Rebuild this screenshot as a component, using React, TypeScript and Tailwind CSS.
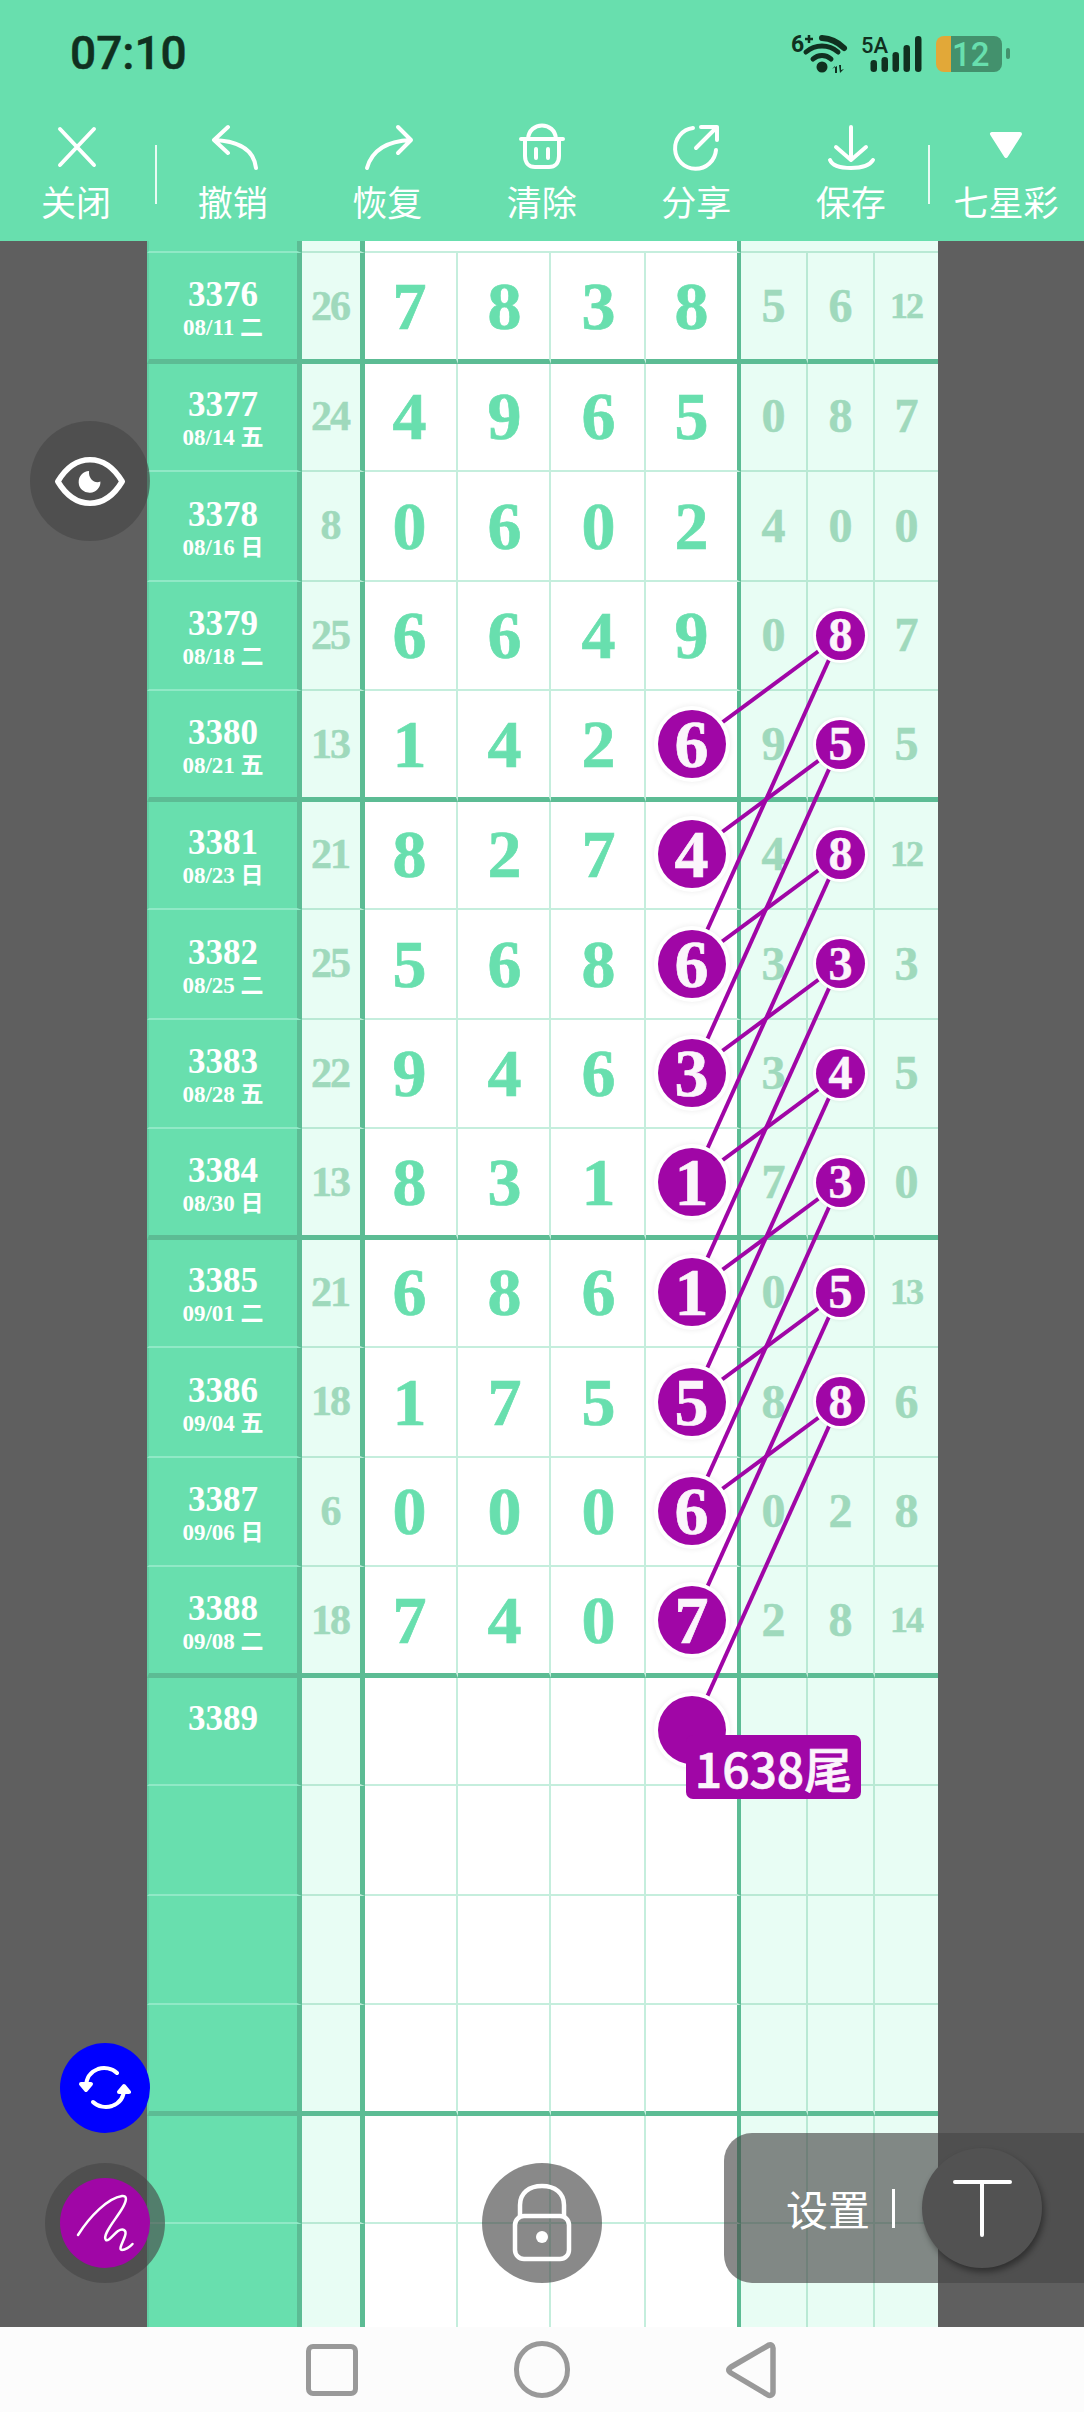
import React from "react";

const serif = "[font-family:'Liberation_Serif','Noto_Sans_CJK_SC',serif]";
const cjk = "[font-family:'Noto_Sans_CJK_SC',sans-serif]";

type Row = { n: string; d: string; s: string; m: string[]; r: string[]; big?: boolean; small?: boolean };
const data: Row[] = [
  { n: "3376", d: "08/11 二", s: "26", m: ["7", "8", "3", "8"], r: ["5", "6", "12"] },
  { n: "3377", d: "08/14 五", s: "24", m: ["4", "9", "6", "5"], r: ["0", "8", "7"] },
  { n: "3378", d: "08/16 日", s: "8", m: ["0", "6", "0", "2"], r: ["4", "0", "0"] },
  { n: "3379", d: "08/18 二", s: "25", m: ["6", "6", "4", "9"], r: ["0", "8", "7"], small: true },
  { n: "3380", d: "08/21 五", s: "13", m: ["1", "4", "2", "6"], r: ["9", "5", "5"], big: true, small: true },
  { n: "3381", d: "08/23 日", s: "21", m: ["8", "2", "7", "4"], r: ["4", "8", "12"], big: true, small: true },
  { n: "3382", d: "08/25 二", s: "25", m: ["5", "6", "8", "6"], r: ["3", "3", "3"], big: true, small: true },
  { n: "3383", d: "08/28 五", s: "22", m: ["9", "4", "6", "3"], r: ["3", "4", "5"], big: true, small: true },
  { n: "3384", d: "08/30 日", s: "13", m: ["8", "3", "1", "1"], r: ["7", "3", "0"], big: true, small: true },
  { n: "3385", d: "09/01 二", s: "21", m: ["6", "8", "6", "1"], r: ["0", "5", "13"], big: true, small: true },
  { n: "3386", d: "09/04 五", s: "18", m: ["1", "7", "5", "5"], r: ["8", "8", "6"], big: true, small: true },
  { n: "3387", d: "09/06 日", s: "6", m: ["0", "0", "0", "6"], r: ["0", "2", "8"], big: true },
  { n: "3388", d: "09/08 二", s: "18", m: ["7", "4", "0", "7"], r: ["2", "8", "14"], big: true },
  { n: "3389", d: "\u00a0", s: "", m: ["", "", "", ""], r: ["", "", ""], big: true },
  ...Array.from({ length: 5 }, () => ({ n: "", d: "", s: "", m: ["", "", "", ""], r: ["", "", ""] })),
];

const rowY = (i: number) => 306.75 + 109.5 * i;
const lines: [number, number][] = [];
for (let i = 3; i <= 10; i++) {
  lines.push([i, i + 1], [i, i + 3]);
}

function heightClass(i: number) {
  const thick = i % 4 === 0;
  const prevThick = i % 4 === 1;
  if (thick) return "h-[111px]";
  if (prevThick) return "h-[108px]";
  return "h-[109.5px]";
}

function Tool({ label, x, children, w }: { label: string; x: number; children: React.ReactNode; w: string }) {
  return (
    <div className={`flex flex-col items-center ${w}`}>
      <svg width="60" height="52" viewBox={`${x - 30} 120 60 52`} fill="none" stroke="#fff" strokeWidth="4" strokeLinecap="round" strokeLinejoin="round">
        {children}
      </svg>
      <div className={`mt-[8px] text-[35px] leading-[42px] text-white whitespace-nowrap ${cjk}`}>{label}</div>
    </div>
  );
}

function StatusIcons() {
  return (
    <svg width="280" height="70" viewBox="0 0 280 70" className="shrink-0">
      <text x="31" y="32" fontSize="23" fontWeight="700" fill="#10301f" fontFamily="Roboto">6</text>
      <path d="M45 19h8M49 15v8" stroke="#10301f" strokeWidth="2.500" />
      <circle cx="62" cy="47" r="5.500" fill="#10301f" />
      <g fill="none" stroke="#10301f" strokeLinecap="round">
        <path d="M53 39a13 13 0 0 1 18 0" strokeWidth="5" />
        <path d="M46 32a24 24 0 0 1 32 0" strokeWidth="5" />
        <path d="M62 18a34 34 0 0 1 22 10" strokeWidth="6" />
      </g>
      <path d="M72 49l3-3v7h2v-7zM79 45h2v5l3-1-4 4z" fill="#10301f" />
      <text x="101" y="33" fontSize="22" fontWeight="500" fill="#10301f" fontFamily="Roboto">5A</text>
      <g fill="#10301f">
        <rect x="110.500" y="40" width="6.500" height="12" rx="3.200" />
        <rect x="121.500" y="37" width="6.500" height="15" rx="3.200" />
        <rect x="132.500" y="32" width="6.500" height="20" rx="3.200" />
        <rect x="143.500" y="25" width="6.500" height="27" rx="3.200" />
        <rect x="155" y="16" width="6.500" height="36" rx="3.200" />
      </g>
      <path d="M191 16h-7a8 8 0 0 0-8 8v20a8 8 0 0 0 8 8h7z" fill="#e2a838" />
      <path d="M191 16h43a8 8 0 0 1 8 8v20a8 8 0 0 1-8 8h-43z" fill="#43916d" />
      <rect x="246" y="28" width="4" height="11" rx="2" fill="#43916d" />
      <text x="192" y="46" fontSize="33" fontWeight="500" fill="#68dfae" fontFamily="Roboto">12</text>
    </svg>
  );
}

export default function App() {
  return (
    <div className="relative flex h-[2412px] w-[1084px] flex-col overflow-hidden bg-[#5f5f5f]">
      {/* header */}
      <div className="h-[241px] shrink-0 bg-[#68dfae]">
        <div className="flex h-[120px] items-start justify-between">
          <div className="ml-[70px] mt-[26px] text-[46px] font-medium leading-[54px] text-[#10301f] [font-family:Roboto,sans-serif] [-webkit-text-stroke:0.5px_#10301f]">07:10</div>
          <div className="mr-[44px] mt-[20px]">
            <StatusIcons />
          </div>
        </div>
        <div className="flex h-[121px] items-start">
          <Tool label="关闭" x={76} w="w-[152px] shrink-0">
            <path d="M60 129L94 165M94 129L60 165" />
          </Tool>
          <div className="-mr-[1.5px] ml-[3px] mt-[25px] h-[59px] w-[2px] bg-[#e8fbf3]" />
          <Tool label="撤销" x={232} w="w-[154.5px] shrink-0">
            <path d="M227 127L213 140L227 153M213 140C238 141 253 150 255 168" />
          </Tool>
          <Tool label="恢复" x={387} w="w-[154.5px] shrink-0">
            <path d="M398 127L411 140L398 153M411 140C386 141 372 150 367 168" />
          </Tool>
          <Tool label="清除" x={542} w="w-[154.5px] shrink-0">
            <path d="M521 139H563M528 139C529 121 555 121 556 139M525 139V156C525 163 529 167 535 167H549C555 167 559 163 559 156V139M536 149V158M548 149V158" />
          </Tool>
          <Tool label="分享" x={696} w="w-[154.5px] shrink-0">
            <path d="M693 128A20.500 20.500 0 1 0 716 150M696 148L717 127M701 127H717V140" />
          </Tool>
          <Tool label="保存" x={850} w="w-[154.5px] shrink-0">
            <path d="M850 127V159M835 147L850 160L865 147M829 160C831 165 838 168 850 168C862 168 869 165 872 160" />
          </Tool>
          <div className="mt-[25px] h-[59px] w-[2px] bg-[#e8fbf3]" />
          <Tool label="七星彩" x={1007} w="w-[152px] shrink-0">
            <path d="M993 134H1021L1007 156Z" fill="#fff" />
          </Tool>
        </div>
      </div>

      {/* table */}
      <div className="relative flex-1 overflow-hidden pl-[147px]">
        <div className="flex h-[12px] w-[791px]">
          <div className="h-full w-[155px] border-b-2 border-l-2 border-r-[5px] border-b-[#90e9c6] border-l-[#62d0a4] border-r-[#5cbc94] bg-[#68dfae]" />
          <div className="h-full w-[63px] border-b-2 border-r-[5px] border-b-[#b9e9d4] border-r-[#5cbc94] bg-[#e8fdf4]" />
          <div className="h-full w-[376px] border-b-2 border-r-[4px] border-b-[#c5eedd] border-r-[#5cbc94] bg-white" />
          <div className="h-full w-[197px] border-b-2 border-b-[#b9e9d4] bg-[#e8fdf4]" />
        </div>
        {data.map((row, i) => {
          const thick = i % 4 === 0;
          const nudge = i % 4 === 1 ? "pb-[2px]" : "";
          const b = thick ? "border-b-[5px] border-b-[#5cbc94]" : "border-b-2";
          const mb = thick ? b : `${b} border-b-[#c5eedd]`;
          const rb = thick ? b : `${b} border-b-[#b9e9d4]`;
          const lb = thick ? b : `${b} border-b-[#90e9c6]`;
          return (
            <div key={i} className={`flex w-[791px] ${heightClass(i)}`}>
              <div className={`h-full w-[155px] border-l-2 border-r-[5px] border-l-[#62d0a4] border-r-[#5cbc94] bg-[#68dfae] text-white ${nudge} ${lb} ${serif}`}>
                <div className="flex h-full flex-col items-center justify-center pt-[8px]">
                  {row.n && <div className="text-[35px] font-bold leading-[36px]">{row.n}</div>}
                  {row.n && <div className="text-[23px] font-bold leading-[30px] whitespace-pre">{row.d}</div>}
                </div>
              </div>
              <div className={`flex h-full w-[63px] items-center justify-center border-r-[5px] border-r-[#5cbc94] bg-[#e8fdf4] pr-[2px] text-[42px] font-bold tracking-[-2px] text-[#9fd9bc] [-webkit-text-stroke:0.5px_#9fd9bc] ${nudge} ${rb} ${serif}`}>
                {row.s}
              </div>
              {row.m.map((v, j) => {
                const ball = j === 3 && row.big;
                const widths = [
                  "w-[93px] border-r-2 border-r-[#c5eedd] pr-[2px]",
                  "w-[93px] border-r-2 border-r-[#c5eedd] pl-[2px]",
                  "w-[95px] border-r-2 border-r-[#c5eedd] pl-[2px]",
                  "w-[95px] border-r-[4px] border-r-[#5cbc94]",
                ];
                return (
                  <div key={j} className={`flex h-full items-center justify-center bg-white text-[68px] font-bold text-[#68dfae] [-webkit-text-stroke:0.7px_currentColor] ${widths[j]} ${nudge} ${mb} ${serif}`}>
                    {ball ? (
                      <div className="relative z-20 flex h-[68px] w-[68px] items-center justify-center rounded-full bg-[#a006a6] text-[#fbf5fb] shadow-[0_0_0_4px_#ffffff,0_0_5px_5px_rgba(0,0,0,0.06)]">{v}</div>
                    ) : (
                      v
                    )}
                  </div>
                );
              })}
              {row.r.map((v, j) => {
                const ball = j === 1 && row.small;
                const widths = ["w-[67px] border-r-2 border-r-[#b9e9d4]", "w-[67px] border-r-2 border-r-[#b9e9d4]", "w-[63px]"];
                return (
                  <div key={j} className={`flex h-full items-center justify-center bg-[#e8fdf4] font-bold text-[#9fd9bc] [-webkit-text-stroke:0.5px_currentColor] ${v.length > 1 ? "pr-[1px] text-[36px] tracking-[-2px]" : "text-[48px]"} ${widths[j]} ${nudge} ${rb} ${serif}`}>
                    {ball ? (
                      <div className="relative z-20 flex h-[49px] w-[49px] items-center justify-center rounded-full bg-[#a006a6] text-[48px] text-[#fbf5fb] shadow-[0_0_0_3px_#ffffff,0_0_3px_4px_rgba(0,0,0,0.05)]">{v}</div>
                    ) : (
                      v
                    )}
                  </div>
                );
              })}
            </div>
          );
        })}
      </div>

      {/* nav */}
      <div className="flex h-[85px] shrink-0 items-center bg-[#fcfcfc] pl-[306px]">
        <div className="h-[52px] w-[52px] rounded-[7px] border-[5px] border-[#999999]" />
        <div className="ml-[156px] h-[57px] w-[56px] rounded-full border-[5px] border-[#999999]" />
        <svg className="ml-[156px]" width="50" height="60" viewBox="0 0 50 60" fill="none" stroke="#999" strokeWidth="5.500" strokeLinejoin="round">
          <path d="M43 5C45 4 47 6 47 8V52C47 55 44 56 42 55L5 33C2 31 2 29 5 27Z" />
        </svg>
      </div>

      {/* connecting lines */}
      <svg className="pointer-events-none absolute left-0 top-0 z-10" width="1084" height="2412" viewBox="0 0 1084 2412">
        {lines.map(([a, b], k) => (
          <line key={k} x1={840} y1={rowY(a)} x2={692} y2={rowY(b)} stroke="#a006a6" strokeWidth="4" />
        ))}
      </svg>

      {/* 1638 tag */}
      <div className={`absolute left-[686px] top-[1735px] z-30 flex h-[64px] w-[175px] items-center justify-center rounded-[7px] bg-[#a006a6] text-[48px] font-medium text-[#fbf5fb] [-webkit-text-stroke:0.7px_#fbf5fb] ${cjk}`}>1638尾</div>

      {/* floating buttons */}
      <div className="absolute left-[30px] top-[421px] z-30 flex h-[120px] w-[120px] items-center justify-center rounded-full bg-[rgba(71,71,71,0.64)]">
        <svg width="76" height="53" viewBox="0 0 80 56" fill="none">
          <path d="M6 28C15 13 27 5 40 5C53 5 65 13 74 28C65 43 53 51 40 51C27 51 15 43 6 28Z" stroke="#fff" strokeWidth="6" strokeLinejoin="round" />
          <path d="M39 17A11.500 11.500 0 1 0 51 28C46 31 38 26 39 17Z" fill="#fff" />
        </svg>
      </div>

      <div className="absolute left-[60px] top-[2043px] z-30 flex h-[90px] w-[90px] items-center justify-center rounded-full bg-[#0000ff]">
        <svg width="52" height="44" viewBox="0 0 52 44" fill="none" stroke="#fff" strokeWidth="4" strokeLinecap="round" strokeLinejoin="round">
          <path d="M38 7C33 2 25 1 19 3C11 6 7 12 7 21" />
          <path d="M14 36C19 41 27 42 33 40C41 37 45 31 45 23" />
          <path d="M2 18L7 24L12 18Z" fill="#fff" />
          <path d="M40 26L45 20L50 26Z" fill="#fff" />
        </svg>
      </div>

      <div className="absolute left-[45px] top-[2163px] z-30 flex h-[120px] w-[120px] items-center justify-center rounded-full bg-[rgba(71,71,71,0.64)]">
        <div className="h-[90px] w-[90px] rounded-full bg-[#a006a6]">
          <svg width="90" height="90" viewBox="0 0 90 90" fill="none" stroke="#fff" strokeWidth="2.500" strokeLinecap="round" strokeLinejoin="round">
            <path d="M18 57C30 38 48 20 62 18C70 17 64 28 60 34C52 46 42 58 46 62C48 64 54 56 58 53C63 50 67 52 65 58C63 64 58 72 62 72C65 72 70 69 72.500 66" />
          </svg>
        </div>
      </div>

      <div className="absolute left-[482px] top-[2163px] z-30 flex h-[120px] w-[120px] items-center justify-center rounded-full bg-[rgba(71,71,71,0.64)]">
        <svg width="60" height="80" viewBox="0 0 60 80" fill="none" stroke="#fff" strokeWidth="4.500">
          <path d="M8 34V22C8 10 17 3 30 3C43 3 52 10 52 22V34" />
          <rect x="3" y="33" width="54" height="43" rx="9" />
          <circle cx="30" cy="54" r="6" fill="#fff" stroke="none" />
        </svg>
      </div>

      {/* settings */}
      <div className="absolute left-[724px] top-[2133px] z-30 flex h-[150px] w-[360px] items-center rounded-l-[28px] bg-[rgba(71,71,71,0.64)] pl-[62px]">
        <span className={`text-[42px] leading-none text-white ${cjk}`}>设置</span>
        <div className="ml-[22px] h-[39px] w-[3px] bg-white" />
        <div className="ml-[27px] flex h-[120px] w-[120px] items-center justify-center rounded-full bg-[#525252] shadow-[2px_4px_6px_rgba(0,0,0,0.4)]">
          <svg width="60" height="60" viewBox="0 0 60 60" fill="none" stroke="#fff" strokeWidth="4" strokeLinecap="round">
            <path d="M3 4H58M30 4V57" />
          </svg>
        </div>
      </div>
    </div>
  );
}
